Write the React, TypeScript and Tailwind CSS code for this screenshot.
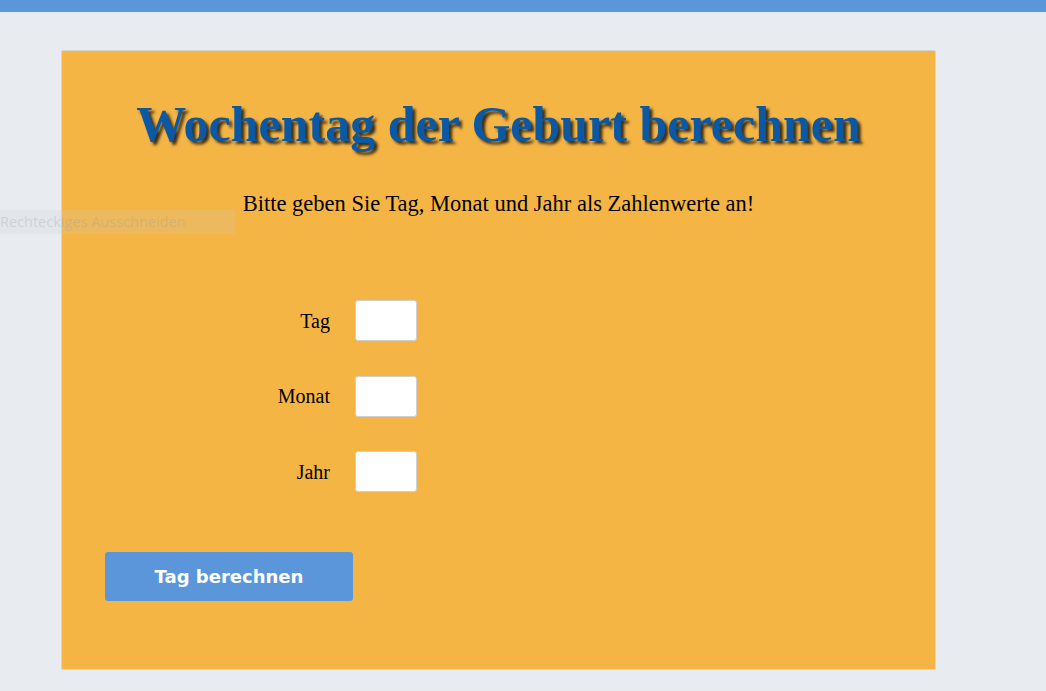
export default function App() {
  const fields = ['Tag', 'Monat', 'Jahr']
  const serif = { fontFamily: '"Liberation Serif", "Times New Roman", serif' }

  return (
    <div className="relative min-h-[691px] bg-[#e8ecf0]">
      {/* top bar */}
      <div className="h-[12px] bg-[#5b96db]" />

      <div className="ml-[61px] mt-[38px] flex h-[620px] w-[875px] flex-col rounded-[2px] border border-[#d4d4d4] bg-[#f5b545]">
        <h1
          className="mt-[45px] text-center text-[50px] font-bold leading-[57px] text-[#0b58a5] [text-shadow:3px_3px_3px_rgba(0,0,0,0.75)]"
          style={serif}
        >
          Wochentag der Geburt berechnen
        </h1>
        <p className="mt-[38px] text-center text-[22.5px] leading-[26px] text-black" style={serif}>
          Bitte geben Sie Tag, Monat und Jahr als Zahlenwerte an!
        </p>

        <div className="mt-[83px] ml-[168px] flex flex-col gap-[34.5px]">
          {fields.map((f) => (
            <div key={f} className="flex items-center gap-[25px]">
              <label className="w-[100px] text-right text-[20px] text-black" style={serif}>
                {f}
              </label>
              <input
                type="text"
                className="h-[41px] w-[62px] rounded-[3px] border border-[#cfcfcf] bg-white outline-none"
              />
            </div>
          ))}
        </div>

        <button
          className="mt-[60px] ml-[43px] h-[49px] w-[248px] rounded-[3px] bg-[#5b96db] text-[18px] font-bold text-white"
          style={{ fontFamily: '"DejaVu Sans", Verdana, sans-serif' }}
        >
          Tag berechnen
        </button>
      </div>

      {/* snipping tool tooltip left over in the screenshot */}
      <div
        className="absolute left-0 top-[210px] flex h-[24px] w-[235px] items-center bg-[rgba(200,205,212,0.18)] text-[14.5px] text-[rgba(150,158,168,0.3)]"
        style={{ fontFamily: '"Open Sans", "Noto Sans", sans-serif' }}
      >
        Rechteckiges Ausschneiden
      </div>
    </div>
  )
}
